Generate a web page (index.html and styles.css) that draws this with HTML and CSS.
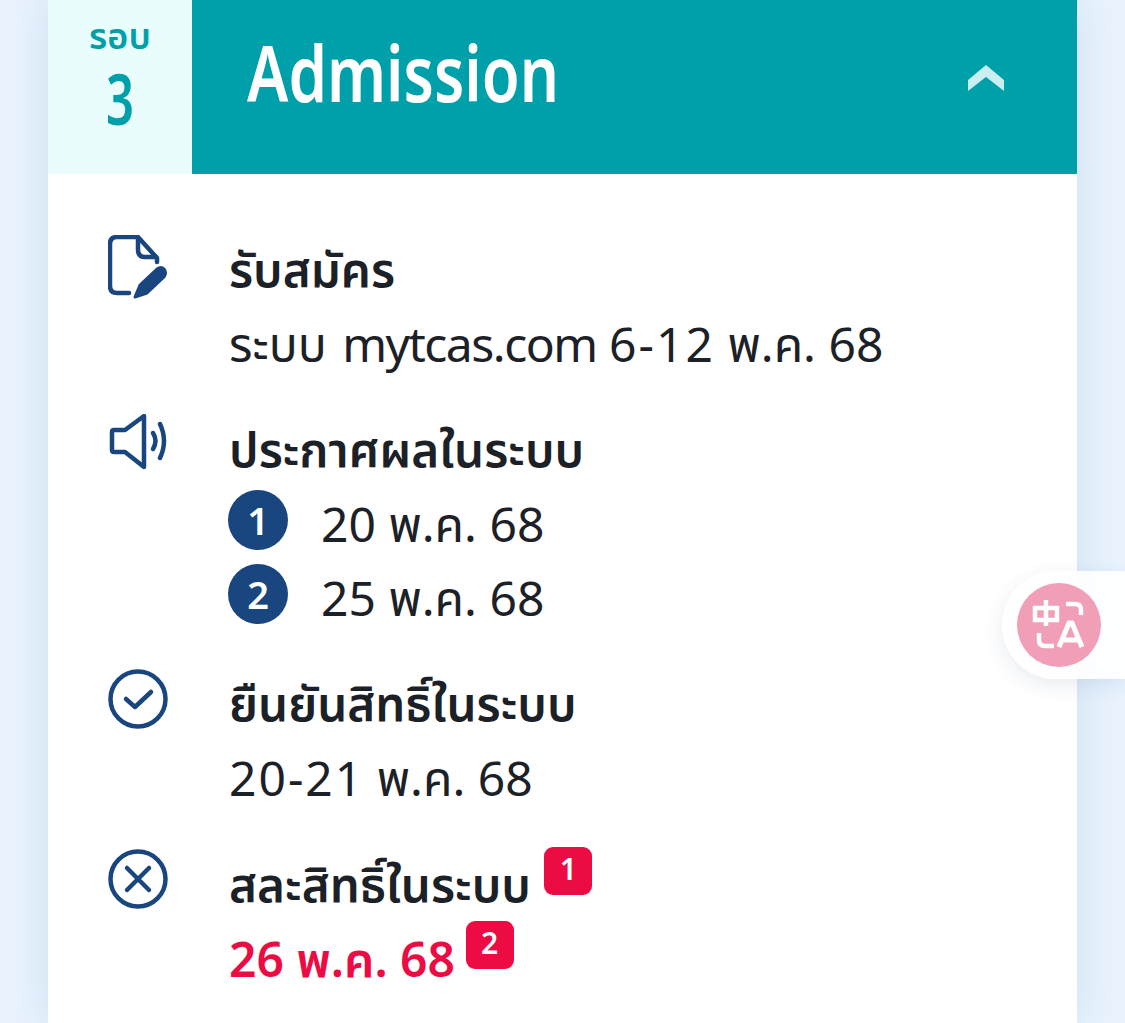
FILE: index.html
```html
<!DOCTYPE html>
<html lang="th">
<head>
    <meta charset="UTF-8">
    <meta name="viewport" content="width=device-width, initial-scale=1.0">
    <title>Admission</title>
    <link rel="stylesheet" href="styles.css">
</head>
<body>
    <div class="card">
        <div class="card-head">
            <div class="round">
                <span class="round-label">รอบ</span>
                <span class="round-num">3</span>
            </div>
            <div class="head-bar">
                <h2>Admission</h2>
                <svg class="chevron" width="36" height="26" viewBox="0 0 36 26"><polygon points="18,0 36,15 36,26 18,12 0,26 0,15" fill="#c9eff0"/></svg>
            </div>
        </div>

        <div class="card-body">
            <!-- รับสมัคร -->
            <div class="row">
                <svg class="icon" width="60" height="66" viewBox="0 0 60 66" fill="none" stroke="#1a4680" stroke-width="4.5" stroke-linecap="round" stroke-linejoin="round">
                    <path d="M49 27V23L30 2H9Q2 2 2 9V51Q2 58 9 58H21"/>
                    <path d="M30 3V15Q30 22 37 22H48"/>
                    <path d="M27 62L32 50L49 34Q53 31 56 34Q59 38 56 42L39 58Z" fill="#1a4680" stroke-width="3"/>
                </svg>
                <div class="text">
                    <div class="title">รับสมัคร</div>
                    <div class="line">ระบบ <span class="site">mytcas.com</span> <span class="range">6-12</span> พ.ค. 68</div>
                </div>
            </div>

            <!-- ประกาศผล -->
            <div class="row">
                <svg class="icon icon-sound" width="60" height="56" viewBox="0 0 60 56" fill="none" stroke="#1a4680" stroke-linecap="round" stroke-linejoin="round">
                    <path d="M6 16H17L36 2V53L17 38H6Q4 38 4 36V18Q4 16 6 16Z" stroke-width="4.5"/>
                    <path d="M45 19Q50 27 45 35" stroke-width="4.5"/>
                    <path d="M52 10Q60 27 52 44" stroke-width="4.5"/>
                </svg>
                <div class="text">
                    <div class="title">ประกาศผลในระบบ</div>
                    <div class="line dated"><span class="num">1</span>20 พ.ค. 68</div>
                    <div class="line dated"><span class="num">2</span>25 พ.ค. 68</div>
                </div>
            </div>

            <!-- ยืนยันสิทธิ์ -->
            <div class="row">
                <svg class="icon" width="60" height="60" viewBox="0 0 60 60" fill="none" stroke="#1a4680" stroke-width="4.5" stroke-linecap="round" stroke-linejoin="round">
                    <circle cx="30" cy="30" r="27.5"/>
                    <path d="M18 30L27 38L43 23"/>
                </svg>
                <div class="text">
                    <div class="title">ยืนยันสิทธิ์ในระบบ</div>
                    <div class="line"><span class="range">20-21</span> พ.ค. 68</div>
                </div>
            </div>

            <!-- สละสิทธิ์ -->
            <div class="row">
                <svg class="icon" width="60" height="60" viewBox="0 0 60 60" fill="none" stroke="#1a4680" stroke-width="4.5" stroke-linecap="round" stroke-linejoin="round">
                    <circle cx="30" cy="30" r="27.5"/>
                    <path d="M19 19L41 41M41 19L19 41"/>
                </svg>
                <div class="text">
                    <div class="title">สละสิทธิ์ในระบบ <sup class="tag tag-title">1</sup></div>
                    <div class="line red">26 พ.ค. 68 <sup class="tag tag-date">2</sup></div>
                </div>
            </div>
        </div>
    </div>

    <!-- ปุ่มแปลภาษา -->
    <div class="translate">
        <div class="translate-btn">
            <svg width="58" height="52" viewBox="0 0 58 52" fill="none" stroke="#fff" stroke-width="4.5">
                <path d="M5 9H27V21H5ZM16 1V27"/>
                <path d="M36 5H45Q51 5 51 11V16"/>
                <path d="M9 34V41Q9 47 15 47H24"/>
                <path d="M29 48L39 24H42L52 48M33 41H48" stroke-width="5"/>
            </svg>
        </div>
    </div>
</body>
</html>
```

FILE: styles.css
```css
html, body {
    margin: 0;
    height: 1023px;
    overflow: hidden;
}
body {
    background: #e8f3fe;
    font-family: "Noto Sans", "Noto Sans Thai", "Liberation Sans", sans-serif;
    color: #1c2127;
}
.card {
    width: 1029px;
    height: 1023px;
    margin-left: 48px;
    background: #fff;
    box-shadow: 0 0 40px rgba(26, 70, 128, 0.12);
}
.card-head {
    display: flex;
    height: 174px;
}
.round {
    width: 144px;
    background: #e9fdfd;
    color: #00a0aa;
    display: flex;
    flex-direction: column;
    align-items: center;
    padding-top: 14px;
    box-sizing: border-box;
    font-weight: 600;
}
.round-label {
    font-size: 36px;
    line-height: 44px;
    height: 44px;
}
/* no condensed font installed, squeeze the big glyphs */
.round-num {
    font-size: 70px;
    line-height: 80px;
    height: 80px;
    font-weight: 600;
    transform: scaleX(0.7);
}
.head-bar {
    flex: 1;
    background: #00a0aa;
    display: flex;
    align-items: flex-start;
    justify-content: space-between;
    padding: 26px 73px 0 55px;
}
.head-bar h2 {
    margin: 0;
    color: #fff;
    font-size: 77px;
    line-height: 94px;
    font-weight: 600;
    transform: scaleX(0.8);
    transform-origin: left center;
}
.chevron {
    margin-top: 39px;
}
.card-body {
    display: flex;
    flex-direction: column;
    gap: 32px;
    padding: 59px 0 0 60px;
}
.row {
    display: flex;
    gap: 61px;
}
.icon {
    margin-top: 2px;
}
.icon-sound {
    margin-top: 1px;
}
.text {
    display: flex;
    flex-direction: column;
}
.title {
    height: 74px;
    font-size: 47.5px;
    line-height: 71px;
    font-weight: 600;
}
.line {
    height: 74px;
    font-size: 48px;
    line-height: 74px;
}
.site {
    margin-left: 3px;
    letter-spacing: -1.5px;
}
.range {
    letter-spacing: 2px;
}
.dated {
    display: flex;
    align-items: center;
}
.num {
    width: 60px;
    height: 60px;
    margin: -8px 33px 0 -1px;
    border-radius: 50%;
    background: #1a4680;
    color: #fff;
    font-size: 38px;
    font-weight: 600;
    display: flex;
    align-items: center;
    justify-content: center;
}
.red {
    color: #ec0c43;
    font-weight: 600;
}
.tag {
    display: inline-block;
    width: 48px;
    height: 48px;
    border-radius: 9px;
    background: #ec0c43;
    color: #fff;
    font-size: 30px;
    line-height: 44px;
    font-weight: 600;
    text-align: center;
}
.tag-title {
    margin-left: 1px;
    vertical-align: 22px;
}
.tag-date {
    margin-left: -2px;
    vertical-align: 23px;
}
.translate {
    position: absolute;
    top: 571px;
    right: 0;
    width: 123px;
    height: 108px;
    border-radius: 54px 0 0 54px;
    background: rgba(255, 255, 255, 0.9);
    box-shadow: 0 6px 20px rgba(26, 70, 128, 0.1);
    padding: 12px 0 0 15px;
    box-sizing: border-box;
}
.translate-btn {
    width: 84px;
    height: 84px;
    border-radius: 50%;
    background: #f19eb7;
    display: flex;
    align-items: center;
    justify-content: center;
}
```
